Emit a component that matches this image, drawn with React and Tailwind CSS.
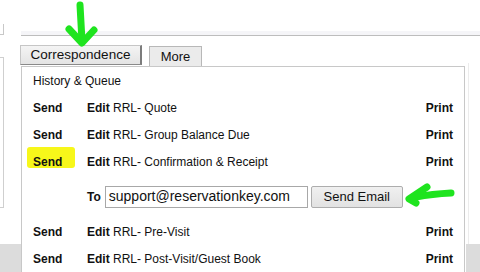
import React from "react";

const rows = [
  { name: "Quote" },
  { name: "Group Balance Due" },
  { name: "Confirmation & Receipt", marked: true },
];

const rowsAfter = [{ name: "Pre-Visit" }, { name: "Post-Visit/Guest Book" }];

const Row = ({ name, marked }) => (
  <div className="flex h-[27px] items-center pl-[11px] pr-[11px] text-[12px] text-[#111]">
    <span className="relative w-[54px] font-bold">
      {marked && (
        <span className="absolute left-[-6px] top-[-6px] h-[21px] w-[48px] rounded-[3px] bg-[#f7f71a]" />
      )}
      <span className="relative">Send</span>
    </span>
    <span className="whitespace-pre">
      <span className="font-bold">Edit</span> RRL- {name}
    </span>
    <span className="ml-auto font-bold">Print</span>
  </div>
);

const Arrows = () => (
  <svg
    className="pointer-events-none absolute left-0 top-0"
    width="480"
    height="272"
    viewBox="0 0 480 272"
  >
    <g stroke="#1fe41f" strokeWidth="7" strokeLinecap="round" strokeLinejoin="round" fill="none">
      <path d="M80 5 Q81 24 82 41" />
      <path d="M69 29 L82 43 L94 30" />
      <path d="M451 193 Q432 194 416 197" />
      <path d="M427 187 L409 199 L416 203" />
    </g>
  </svg>
);

const App = () => {
  return (
    <div className="relative flex h-[272px] w-[480px] overflow-hidden bg-white font-['Liberation_Sans',Arial,sans-serif]">
      {/* left strip */}
      <div className="flex w-[21px] flex-col">
        <div className="mt-[24px] h-[11px] w-[4px] border-r border-b border-[#c8c8c8]" />
        <div className="mt-[22px] h-[151px] w-[4px] border-t border-r border-b border-[#cfcfcf]" />
        <div className="flex-1" />
        <div className="h-[28px] bg-[#dcdcdc]" />
      </div>

      {/* main */}
      <div className="flex w-[444px] flex-col">
        <div className="h-[31px]" />
        <div className="h-[4px] bg-[#f5f5f8]" />
        <div className="h-px bg-[#bdbdbd]" />
        <div className="ml-[-1px] mt-[9px] flex h-[21px] items-start gap-[7px] text-[13px] text-[#111]">
          <div className="flex h-[20px] w-[122px] items-center justify-center border border-[#c6c6c6] border-r-2 border-r-[#7c7c7c] border-b-[#8a8a8a] bg-gradient-to-b from-[#f4f4f4] to-[#e4e4e4] text-[13.5px]">
            Correspondence
          </div>
          <div className="mt-px flex h-[20px] w-[53px] items-center justify-center border border-b-0 border-[#b8b8b8] bg-[#ebebeb]">
            More
          </div>
        </div>
        <div className="flex-1 border border-b-0 border-[#c8c8c8]">
          <div className="flex h-[27px] items-center pl-[11px] text-[12px] text-[#111]">
            History &amp; Queue
          </div>
          {rows.map((r) => (
            <Row key={r.name} {...r} />
          ))}
          <div className="flex h-[43px] items-center pl-[65px] text-[12px] text-[#111]">
            <span className="font-bold">To</span>
            <div className="ml-[4px] flex h-[22px] w-[203px] items-center border border-[#a8a8a8] pl-[3px] text-[14px]">
              support@reservationkey.com
            </div>
            <div className="ml-[3px] flex h-[22px] w-[92px] items-center justify-center rounded-[2px] border border-[#adadad] bg-gradient-to-b from-[#f0f0f0] to-[#e2e2e2] text-[13px]">
              Send Email
            </div>
          </div>
          {rowsAfter.map((r) => (
            <Row key={r.name} {...r} />
          ))}
        </div>
      </div>

      {/* right strip */}
      <div className="flex flex-1 flex-col">
        <div className="h-[31px]" />
        <div className="h-[4px] bg-[#f5f5f8]" />
        <div className="h-px bg-[#bdbdbd]" />
        <div className="mt-[27px] ml-[3px] h-[181px] border-l border-[#ececec]" />
        <div className="mt-auto ml-px h-[28px] bg-[#dcdcdc]" />
      </div>

      <Arrows />
    </div>
  );
};

export default App;
